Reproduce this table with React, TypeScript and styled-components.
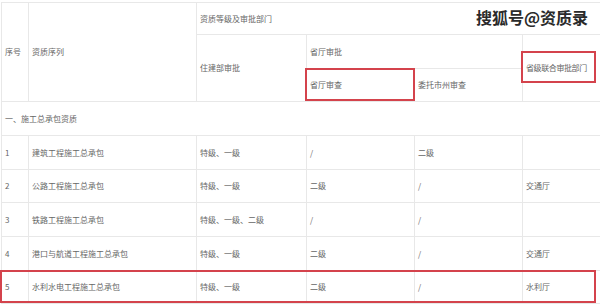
import React from 'react';
import styled, { createGlobalStyle } from 'styled-components';

const Global = createGlobalStyle`
	html, body {
		margin: 0;
		padding: 0;
		background: #fff;
		overflow: hidden;
	}
`;

const Wrap = styled.div`
	position: relative;
	width: 600px;
	height: 305px;
	overflow: hidden;
	padding-top: 2px;
	padding-left: 1px;
	box-sizing: border-box;
	font-family: 'Noto Sans CJK SC', 'Noto Sans', sans-serif;
	color: #666;
`;

const Table = styled.table`
	border-collapse: collapse;
	table-layout: fixed;
	width: 640px;
	font-size: 8px;
	line-height: 1;
`;

const Row = styled.tr<{ h: number }>`
	height: ${({ h }) => h}px;
`;

const Cell = styled.td<{ tight?: boolean }>`
	border: 1px solid #e8e8e8;
	padding: 0 0 0 3px;
	vertical-align: middle;
	white-space: nowrap;
	overflow: hidden;
	letter-spacing: ${({ tight }) => (tight ? '-0.4px' : '0')};
`;

const Mark = styled.div<{ x: number; y: number; w: number; h: number }>`
	position: absolute;
	left: ${({ x }) => x}px;
	top: ${({ y }) => y}px;
	width: ${({ w }) => w}px;
	height: ${({ h }) => h}px;
	border: 2px solid #d4434c;
	box-sizing: border-box;
	pointer-events: none;
`;

const Watermark = styled.div`
	position: absolute;
	top: 5px;
	left: 476px;
	font-size: 16px;
	font-weight: 700;
	color: #2a2a2a;
	text-shadow: 1px 0 #fff, -1px 0 #fff, 0 1px #fff, 0 -1px #fff;
`;

const rows = [
	{ no: '1', name: '建筑工程施工总承包', lvl: '特级、一级', a: '/', b: '二级', c: '' },
	{ no: '2', name: '公路工程施工总承包', lvl: '特级、一级', a: '二级', b: '/', c: '交通厅' },
	{ no: '3', name: '铁路工程施工总承包', lvl: '特级、一级、二级', a: '/', b: '/', c: '' },
	{ no: '4', name: '港口与航道工程施工总承包', lvl: '特级、一级', a: '二级', b: '/', c: '交通厅' },
	{ no: '5', name: '水利水电工程施工总承包', lvl: '特级、一级', a: '二级', b: '/', c: '水利厅' },
];
const heights = [34, 33, 34, 34, 33];

const App: React.FC = () => {
	return (
		<Wrap>
			<Global />
			<Table>
				<colgroup>
					<col style={{ width: 27 }} />
					<col style={{ width: 168 }} />
					<col style={{ width: 110 }} />
					<col style={{ width: 108 }} />
					<col style={{ width: 108 }} />
					<col style={{ width: 119 }} />
				</colgroup>
				<tbody>
					<Row h={32}>
						<Cell rowSpan={3}>序号</Cell>
						<Cell rowSpan={3}>资质序列</Cell>
						<Cell colSpan={4}>资质等级及审批部门</Cell>
					</Row>
					<Row h={34}>
						<Cell rowSpan={2}>住建部审批</Cell>
						<Cell colSpan={2}>省厅审批</Cell>
						<Cell rowSpan={2} tight>省级联合审批部门</Cell>
					</Row>
					<Row h={33}>
						<Cell>省厅审查</Cell>
						<Cell>委托市州审查</Cell>
					</Row>
					<Row h={34}>
						<Cell colSpan={6}>一、施工总承包资质</Cell>
					</Row>
					{rows.map((r, i) => (
						<Row h={heights[i]} key={r.no}>
							<Cell>{r.no}</Cell>
							<Cell>{r.name}</Cell>
							<Cell>{r.lvl}</Cell>
							<Cell>{r.a}</Cell>
							<Cell>{r.b}</Cell>
							<Cell>{r.c}</Cell>
						</Row>
					))}
				</tbody>
			</Table>
			<Watermark>搜狐号@资质录</Watermark>
			<Mark x={305} y={68} w={110} h={33} />
			<Mark x={521} y={51} w={75} h={32} />
			<Mark x={0} y={270} w={596} h={33} />
		</Wrap>
	);
};

export default App;
